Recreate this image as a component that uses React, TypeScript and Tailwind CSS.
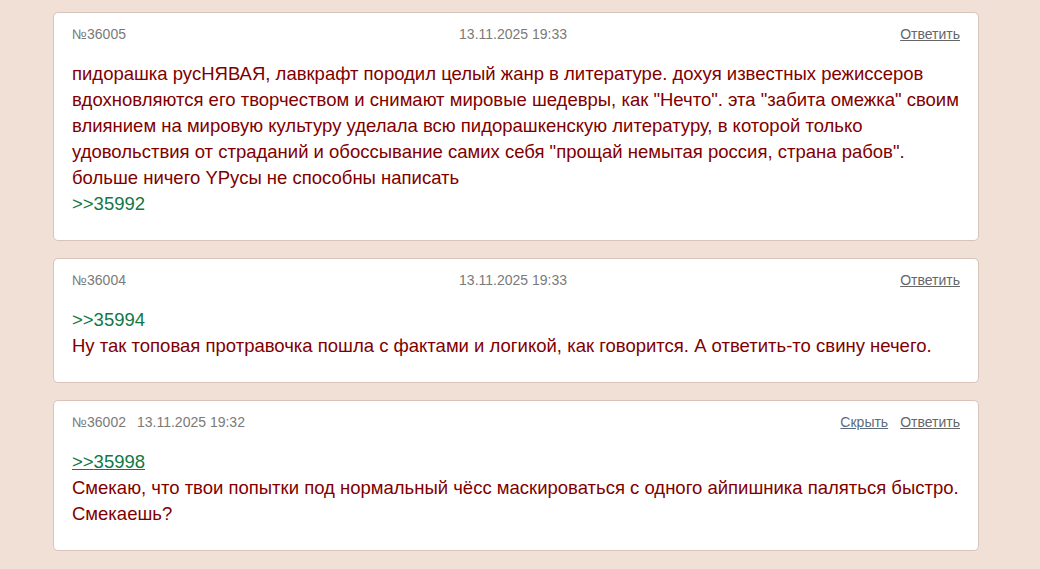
import React from 'react';

interface Post {
  id: number;
  date: string;
  lines: React.ReactNode[];
  canHide?: boolean;
}

const font = { fontFamily: '"Liberation Sans", Arial, sans-serif' };

const Ref: React.FC<{ to: number; underline?: boolean }> = ({ to, underline }) => (
  <a href="#" className={`text-[#117743] ${underline ? 'underline' : 'no-underline'}`}>
    &gt;&gt;{to}
  </a>
);

const posts: Post[] = [
  {
    id: 36005,
    date: '13.11.2025 19:33',
    lines: [
      'пидорашка русНЯВАЯ, лавкрафт породил целый жанр в литературе. дохуя известных режиссеров',
      'вдохновляются его творчеством и снимают мировые шедевры, как "Нечто". эта "забита омежка" своим',
      'влиянием на мировую культуру уделала всю пидорашкенскую литературу, в которой только',
      'удовольствия от страданий и обоссывание самих себя "прощай немытая россия, страна рабов".',
      'больше ничего YРусы не способны написать',
      <Ref to={35992} />,
    ],
  },
  {
    id: 36004,
    date: '13.11.2025 19:33',
    lines: [
      <Ref to={35994} />,
      'Ну так топовая протравочка пошла с фактами и логикой, как говорится. А ответить-то свину нечего.',
    ],
  },
  {
    id: 36002,
    date: '13.11.2025 19:32',
    canHide: true,
    lines: [
      <Ref to={35998} underline />,
      'Смекаю, что твои попытки под нормальный чёсс маскироваться с одного айпишника паляться быстро.',
      'Смекаешь?',
    ],
  },
];

const PostCard: React.FC<{ post: Post }> = ({ post }) => (
  <div className="bg-white border border-[#d9c3bb] rounded-[5px] px-[18px] pt-[11px] pb-[23px]">
    {post.canHide ? (
      <div className="flex justify-between items-center text-[14px] leading-[20px] text-[#7a7a7a]">
        <div className="flex gap-[11px]">
          <span>№{post.id}</span>
          <span>{post.date}</span>
        </div>
        <div className="flex gap-[12px]">
          <a href="#" className="underline text-[#5d6b7d]">Скрыть</a>
          <a href="#" className="underline text-[#666]">Ответить</a>
        </div>
      </div>
    ) : (
      <div className="flex justify-between items-center text-[14px] leading-[20px] text-[#7a7a7a]">
        <span>№{post.id}</span>
        <span>{post.date}</span>
        <a href="#" className="underline text-[#666]">Ответить</a>
      </div>
    )}
    <div className="mt-[17px] text-[18.5px] leading-[26px] text-[#800000]">
      {post.lines.map((line, i) => (
        <div key={i}>{line}</div>
      ))}
    </div>
  </div>
);

export default function App() {
  return (
    <div className="min-h-[569px] bg-[#f0e0d6] pt-[12px] pb-[20px]" style={font}>
      <div className="ml-[53px] w-[926px] flex flex-col gap-[17px]">
        {posts.map((p) => (
          <PostCard key={p.id} post={p} />
        ))}
      </div>
    </div>
  );
}
